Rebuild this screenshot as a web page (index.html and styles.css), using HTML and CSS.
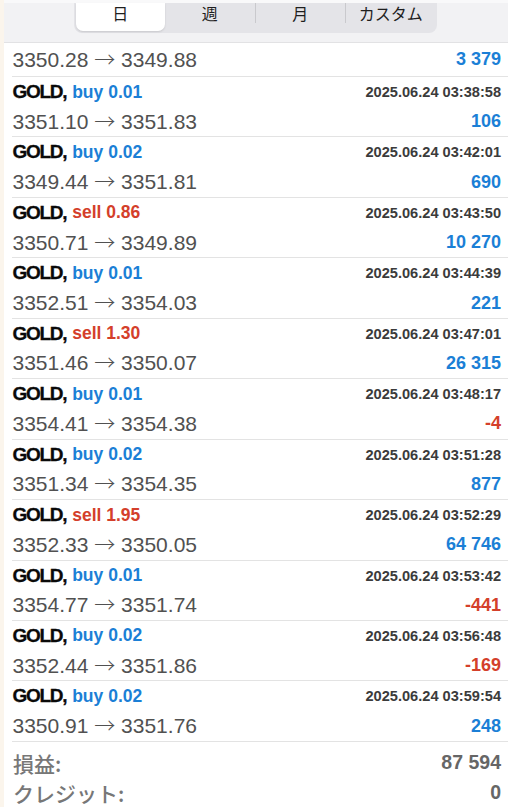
FILE: index.html
```html
<!DOCTYPE html>
<html lang="ja">
<head>
<meta charset="utf-8">
<link rel="stylesheet" href="styles.css">
</head>
<body>
<div class="app">
  <header class="header">
    <div class="seg">
      <div class="seg-item active">日</div>
      <div class="seg-item">週</div>
      <div class="seg-item sep">月</div>
      <div class="seg-item sep">カスタム</div>
    </div>
  </header>
  <main class="list">
    <div class="row partial">
      <div class="line2"><span class="price">3350.28 <span class="arr">→</span> 3349.88</span><span class="profit pos">3 379</span></div>
    </div>
    <div class="row">
      <div class="line1"><span class="sym">GOLD,</span><span class="type buy">buy 0.01</span><span class="date">2025.06.24 03:38:58</span></div>
      <div class="line2"><span class="price">3351.10 <span class="arr">→</span> 3351.83</span><span class="profit pos">106</span></div>
    </div>
    <div class="row">
      <div class="line1"><span class="sym">GOLD,</span><span class="type buy">buy 0.02</span><span class="date">2025.06.24 03:42:01</span></div>
      <div class="line2"><span class="price">3349.44 <span class="arr">→</span> 3351.81</span><span class="profit pos">690</span></div>
    </div>
    <div class="row">
      <div class="line1"><span class="sym">GOLD,</span><span class="type sell">sell 0.86</span><span class="date">2025.06.24 03:43:50</span></div>
      <div class="line2"><span class="price">3350.71 <span class="arr">→</span> 3349.89</span><span class="profit pos">10 270</span></div>
    </div>
    <div class="row">
      <div class="line1"><span class="sym">GOLD,</span><span class="type buy">buy 0.01</span><span class="date">2025.06.24 03:44:39</span></div>
      <div class="line2"><span class="price">3352.51 <span class="arr">→</span> 3354.03</span><span class="profit pos">221</span></div>
    </div>
    <div class="row">
      <div class="line1"><span class="sym">GOLD,</span><span class="type sell">sell 1.30</span><span class="date">2025.06.24 03:47:01</span></div>
      <div class="line2"><span class="price">3351.46 <span class="arr">→</span> 3350.07</span><span class="profit pos">26 315</span></div>
    </div>
    <div class="row">
      <div class="line1"><span class="sym">GOLD,</span><span class="type buy">buy 0.01</span><span class="date">2025.06.24 03:48:17</span></div>
      <div class="line2"><span class="price">3354.41 <span class="arr">→</span> 3354.38</span><span class="profit neg">-4</span></div>
    </div>
    <div class="row">
      <div class="line1"><span class="sym">GOLD,</span><span class="type buy">buy 0.02</span><span class="date">2025.06.24 03:51:28</span></div>
      <div class="line2"><span class="price">3351.34 <span class="arr">→</span> 3354.35</span><span class="profit pos">877</span></div>
    </div>
    <div class="row">
      <div class="line1"><span class="sym">GOLD,</span><span class="type sell">sell 1.95</span><span class="date">2025.06.24 03:52:29</span></div>
      <div class="line2"><span class="price">3352.33 <span class="arr">→</span> 3350.05</span><span class="profit pos">64 746</span></div>
    </div>
    <div class="row">
      <div class="line1"><span class="sym">GOLD,</span><span class="type buy">buy 0.01</span><span class="date">2025.06.24 03:53:42</span></div>
      <div class="line2"><span class="price">3354.77 <span class="arr">→</span> 3351.74</span><span class="profit neg">-441</span></div>
    </div>
    <div class="row">
      <div class="line1"><span class="sym">GOLD,</span><span class="type buy">buy 0.02</span><span class="date">2025.06.24 03:56:48</span></div>
      <div class="line2"><span class="price">3352.44 <span class="arr">→</span> 3351.86</span><span class="profit neg">-169</span></div>
    </div>
    <div class="row">
      <div class="line1"><span class="sym">GOLD,</span><span class="type buy">buy 0.02</span><span class="date">2025.06.24 03:59:54</span></div>
      <div class="line2"><span class="price">3350.91 <span class="arr">→</span> 3351.76</span><span class="profit pos">248</span></div>
    </div>
  </main>
  <footer class="summary">
    <div class="sum-line"><span class="sum-label">損益:</span><span class="sum-value">87 594</span></div>
    <div class="sum-line"><span class="sum-label">クレジット:</span><span class="sum-value">0</span></div>
  </footer>
</div>
</body>
</html>
```
FILE: styles.css
```css
html, body {
  margin: 0;
  padding: 0;
  background: #ffffff;
}
body {
  width: 508px;
  height: 807px;
  overflow: hidden;
  font-family: "Liberation Sans", Arial, sans-serif;
}
.app {
  border-left: 4px solid #fbf5ec;
  min-height: 807px;
  box-sizing: border-box;
}
.header {
  background: #f2f2f4;
  border-top: 3px solid #f9f9fa;
  border-bottom: 1px solid #e2e2e4;
  height: 39px;
  box-sizing: content-box;
  display: flex;
  justify-content: center;
}
.seg {
  width: 363px;
  height: 30px;
  margin-left: -1px;
  background: #e4e4e8;
  border-radius: 0 0 8px 8px;
  display: flex;
  align-items: flex-start;
  padding: 0 1.5px;
  box-sizing: border-box;
  font-family: "Noto Sans CJK JP", sans-serif;
  font-size: 16px;
  color: #1e1e1e;
}
.seg-item {
  flex: 1;
  height: 20px;
  line-height: 20px;
  text-align: center;
}
.seg-item.active {
  height: 28px;
  background: #ffffff;
  border-radius: 0 0 7px 7px;
  box-shadow: 0 1px 2px rgba(0, 0, 0, 0.12);
}
.seg-item.sep {
  border-left: 1px solid #c9c9cd;
}
.list {
  padding-left: 8px;
}
.row {
  border-bottom: 1px solid #e3e3e3;
  padding: 0 7px 0 0.5px;
  height: 60.45px;
  box-sizing: border-box;
}
.row.partial {
  height: 34px;
}
.line1 {
  height: 30px;
  display: flex;
  align-items: center;
}
.line2 {
  height: 29.45px;
  display: flex;
  align-items: center;
  justify-content: space-between;
}
.partial .line2 {
  height: 33px;
}
.sym {
  font-weight: 700;
  font-size: 19px;
  color: #0a0a0a;
  letter-spacing: -1.3px;
  -webkit-text-stroke: 0.3px #0a0a0a;
}
.type {
  font-weight: 700;
  font-size: 17.5px;
  margin-left: 6px;
}
.buy { color: #1b7fd6; }
.sell { color: #d43f2b; }
.date {
  margin-left: auto;
  font-weight: 700;
  font-size: 14.6px;
  color: #3b3b3b;
}
.price {
  font-size: 21px;
  line-height: 24px;
  color: #515151;
}
.arr {
  font-family: "Noto Sans CJK JP", sans-serif;
  font-size: 21px;
  font-weight: 300;
  line-height: 0;
}
.profit {
  font-weight: 700;
  font-size: 18px;
}
.pos { color: #1b7fd6; }
.neg { color: #d43f2b; }
.summary {
  padding: 6px 7px 0 9px;
}
.sum-line {
  height: 30px;
  display: flex;
  align-items: center;
  justify-content: space-between;
}
.sum-label {
  font-family: "Noto Sans CJK JP", sans-serif;
  font-weight: 500;
  font-size: 21px;
  color: #777777;
}
.sum-value {
  font-weight: 700;
  font-size: 19.5px;
  color: #666666;
}
```
